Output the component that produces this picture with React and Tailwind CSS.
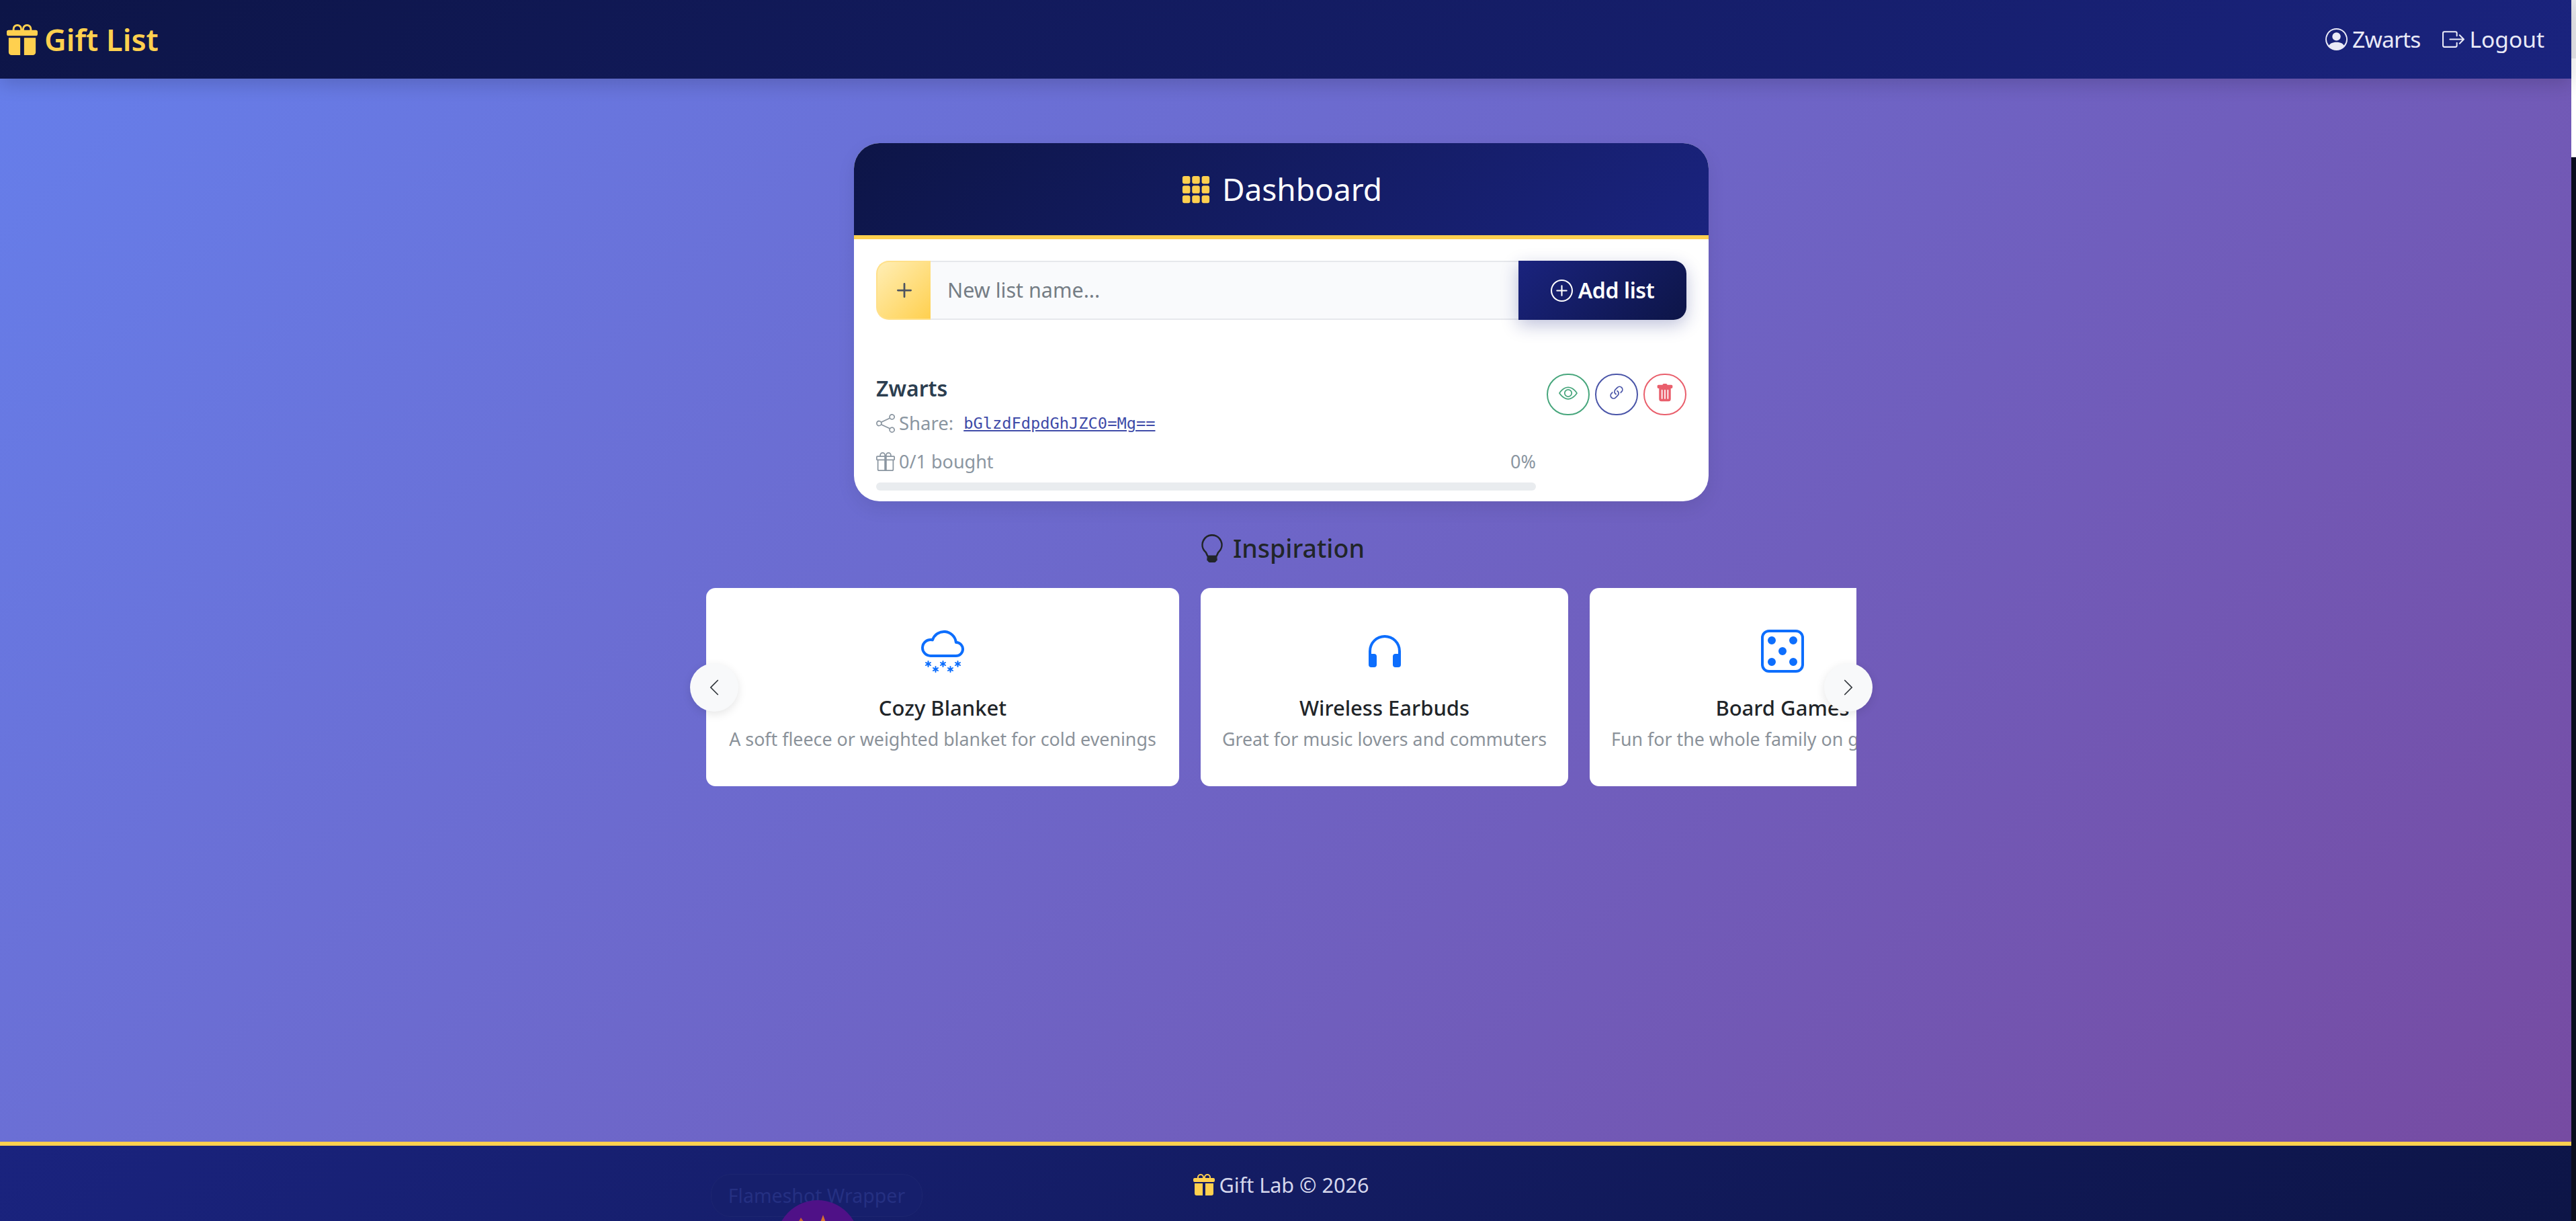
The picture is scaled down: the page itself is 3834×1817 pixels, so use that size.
import React from "react";
import {
  BsGiftFill,
  BsGift,
  BsPersonCircle,
  BsBoxArrowRight,
  BsGrid3X3GapFill,
  BsPlus,
  BsPlusCircle,
  BsShare,
  BsEye,
  BsLink45Deg,
  BsTrashFill,
  BsLightbulb,
  BsCloudSnow,
  BsHeadphones,
  BsDice5,
  BsChevronLeft,
  BsChevronRight,
} from "react-icons/bs";

const ideas = [
  { title: "Cozy Blanket", text: "A soft fleece or weighted blanket for cold evenings", Icon: BsCloudSnow, w: "w-[704px]" },
  { title: "Wireless Earbuds", text: "Great for music lovers and commuters", Icon: BsHeadphones, w: "w-[547px]" },
  { title: "Board Games", text: "Fun for the whole family on game nights", Icon: BsDice5, w: "w-[574px]" },
];

function Navbar() {
  return (
    <nav className="relative z-10 h-[117px] shrink-0 flex items-center justify-between pl-[10px] pr-[40px] bg-[linear-gradient(135deg,#0d1547_0%,#1a237e_100%)] shadow-[0_8px_26px_rgba(0,0,0,0.16)]">
      <div className="flex items-center gap-[10px] text-[#ffd04f] text-[45px] font-semibold">
        <BsGiftFill className="w-[46px] h-[46px]" />
        <span>Gift List</span>
      </div>
      <div className="flex items-center text-[#e9e9f6] text-[33.5px]">
        <BsPersonCircle className="w-[33px] h-[33px]" />
        <span className="ml-[7px] tracking-[-0.8px]">Zwarts</span>
        <BsBoxArrowRight className="w-[33px] h-[33px] ml-[32px]" />
        <span className="ml-[8px]">Logout</span>
      </div>
    </nav>
  );
}

function ListRow() {
  return (
    <div className="flex justify-between mt-[69px]">
      <div className="w-[982px]">
        <div className="mt-[9px] text-[32px] leading-[48px] font-semibold text-[#2c3e50]">Zwarts</div>
        <div className="mt-[6px] flex items-center text-[27.5px] leading-[44px] text-[#8b96a1]">
          <BsShare className="w-[28px] h-[28px]" />
          <span className="ml-[6px]">Share:</span>
          <a href="#" className="ml-[15px] font-['DejaVu_Sans_Mono',monospace] text-[23.7px] text-[#3f4ba8] underline">
            bGlzdFdpdGhJZC0=Mg==
          </a>
        </div>
        <div className="mt-[13px] flex items-center justify-between text-[27px] leading-[44px] text-[#8b96a1]">
          <div className="flex items-center">
            <BsGift className="w-[28px] h-[28px]" />
            <span className="ml-[6px]">0/1 bought</span>
          </div>
          <span>0%</span>
        </div>
        <div className="mt-[9px] h-[12px] rounded-full bg-[#e9ecef]" />
      </div>
      <div className="flex gap-[8px] mt-[11px]">
        <button className="w-[64px] h-[62px] rounded-full border-2 border-[#47a67c] text-[#47a67c] flex items-center justify-center pb-[4px]">
          <BsEye className="w-[28px] h-[28px]" />
        </button>
        <button className="w-[64px] h-[62px] rounded-full border-2 border-[#4a55a8] text-[#4a55a8] flex items-center justify-center pb-[4px]">
          <BsLink45Deg className="w-[28px] h-[28px]" />
        </button>
        <button className="w-[64px] h-[62px] rounded-full border-2 border-[#e95f6c] text-[#e95f6c] flex items-center justify-center pb-[4px]">
          <BsTrashFill className="w-[28px] h-[28px]" />
        </button>
      </div>
    </div>
  );
}

function DashboardCard() {
  return (
    <section className="w-[1272px] h-[533px] mx-auto rounded-[38px] bg-white overflow-hidden shadow-[0_10px_28px_rgba(0,0,0,0.08)]">
      <header className="h-[143px] border-b-[6px] border-[#ffd04f] flex items-center justify-center gap-[16px] text-white text-[46px] bg-[linear-gradient(135deg,#0d1547_0%,#1a237e_100%)]">
        <BsGrid3X3GapFill className="w-[46px] h-[46px] text-[#ffd04f]" />
        <span>Dashboard</span>
      </header>
      <div className="px-[33px] pt-[32px]">
        <div className="flex h-[88px]">
          <div className="w-[81px] flex items-center justify-center rounded-l-[19px] border-2 border-r-0 border-[#ffe08a] bg-[linear-gradient(135deg,#ffeeb5_0%,#ffd04f_100%)] text-[#4d5360]">
            <BsPlus className="w-[44px] h-[44px]" />
          </div>
          <input
            className="flex-1 min-w-0 px-[25px] bg-[#f9fafc] border-y-2 border-[#e6e8ec] text-[30.5px] placeholder:text-[#757d85] outline-none"
            placeholder="New list name..."
          />
          <button className="relative w-[250px] flex items-center justify-center gap-[8px] rounded-r-[19px] text-white text-[32px] font-semibold bg-[linear-gradient(135deg,#1a237e_0%,#0d1547_100%)] shadow-[0_8px_26px_rgba(26,35,126,0.28)]">
            <BsPlusCircle className="w-[33px] h-[33px]" />
            <span className="tracking-[-0.4px]">Add list</span>
          </button>
        </div>
        <ListRow />
      </div>
    </section>
  );
}

function Carousel() {
  return (
    <div className="relative w-[1760px] mx-auto mt-[34px] px-[24px]">
      <div className="flex gap-[32px] overflow-hidden">
        {ideas.map(({ title, text, Icon, w }) => (
          <div key={title} className={`${w} h-[295px] shrink-0 rounded-[14px] bg-white flex flex-col items-center pt-[62px]`}>
            <Icon className="w-[64px] h-[64px] text-[#0d6efd]" />
            <div className="mt-[30px] text-[31px] leading-[44px] font-medium text-[#212529]">{title}</div>
            <div className="mt-[3px] text-[26.8px] leading-[44px] text-[#8b929a] whitespace-nowrap">{text}</div>
          </div>
        ))}
      </div>
      <button className="absolute left-0 top-[112px] w-[72px] h-[72px] rounded-full bg-[#f8f9fa] flex items-center justify-center text-[#33383d] shadow-[0_4px_14px_rgba(0,0,0,0.1)]">
        <BsChevronLeft className="w-[28px] h-[28px]" />
      </button>
      <button className="absolute right-0 top-[112px] w-[72px] h-[72px] rounded-full bg-[#f8f9fa] flex items-center justify-center text-[#33383d] shadow-[0_4px_14px_rgba(0,0,0,0.1)]">
        <BsChevronRight className="w-[28px] h-[28px]" />
      </button>
    </div>
  );
}

function Footer() {
  return (
    <footer className="relative h-[118px] shrink-0 overflow-hidden border-t-[6px] border-[#ffd04f] flex justify-center pt-[35px] pr-[13px] text-[#d5d7ec] text-[30.6px] leading-[46px] bg-[linear-gradient(135deg,#1a237e_0%,#0d1547_100%)]">
      <div className="flex items-center gap-[6px] h-[46px]">
        <BsGiftFill className="w-[32px] h-[32px] text-[#ffd04f]" />
        <span>Gift Lab © 2026</span>
      </div>
      {/* screenshot tool overlay that got caught in the picture */}
      <div className="absolute left-[1058px] top-[42px] w-[315px] h-[64px] rounded-[30px] border border-[#1d2670] bg-[#161f6c] flex items-center justify-center text-[28.5px] text-[#253082]">
        Flameshot Wrapper
      </div>
      <div className="absolute left-[1155px] top-[81px] w-[124px] h-[124px] rounded-full bg-[#4f1187]">
        <svg viewBox="0 0 124 124" className="w-[124px] h-[124px]">
          <path d="M33 33 L37 26 L42 33 Z" fill="#c7622f" />
          <path d="M66 33 L70 22 L74 33 Z" fill="#d9722f" />
        </svg>
      </div>
    </footer>
  );
}

export default function App() {
  return (
    <div className="flex w-[3834px] h-[1817px] overflow-hidden font-['Noto_Sans',sans-serif]">
      <div className="w-[3827px] flex flex-col">
        <Navbar />
        <main className="flex-1 pt-[96px] pr-[13px] bg-[linear-gradient(135deg,#667eea_0%,#764ba2_100%)]">
          <DashboardCard />
          <div className="mt-[45px] h-[50px] flex items-center justify-center gap-[10px] text-[37.5px] font-medium text-[#212529]">
            <BsLightbulb className="w-[42px] h-[42px]" />
            <span>Inspiration</span>
          </div>
          <Carousel />
        </main>
        <Footer />
      </div>
      {/* edge of the window behind */}
      <div className="w-[7px] flex flex-col">
        <div className="h-[87px] bg-[#e8e8ec]" />
        <div className="h-[147px] bg-white" />
        <div className="flex-1 bg-[#0a0d1e]" />
      </div>
    </div>
  );
}
